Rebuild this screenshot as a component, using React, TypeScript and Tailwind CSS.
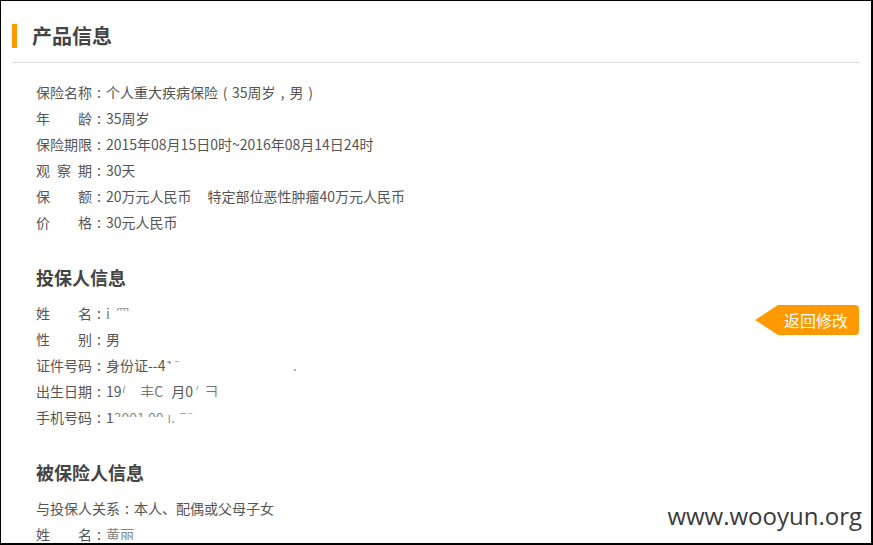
import React from "react";

const cjk = { fontFamily: '"Noto Sans CJK SC", "Noto Sans", sans-serif' };

// full-width punctuation drawn centred in a 1em box, as the original font does
const P = ({ c }: { c: string }) => (
  <span className="inline-block w-[14px] text-center">{c}</span>
);

const Label = ({ text }: { text: string }) => (
  <>
    <span className="inline-block w-[56px] [text-align-last:justify]">{text}</span>
    <P c=":" />
  </>
);

const Row = ({ label, children }: { label: string; children: React.ReactNode }) => (
  <div className="h-[26px] leading-[26px] whitespace-nowrap">
    <Label text={label} />
    {children}
  </div>
);

// partly wiped-out characters, only the top part of the glyph stays
const Faded = ({ text, h = 9, color = "#777" }: { text: string; h?: number; color?: string }) => (
  <span className="inline-block overflow-hidden align-top" style={{ height: h + 7, color }}>
    <span className="block leading-[26px]">{text}</span>
  </span>
);

const Gap = ({ w }: { w: number }) => <span className="inline-block" style={{ width: w }} />;

const SectionTitle = ({ children }: { children: React.ReactNode }) => (
  <h3 className="mt-[30px] mb-[11px] h-[24px] leading-[24px] text-[18px] font-bold text-[#444]">
    {children}
  </h3>
);

export default function App() {
  return (
    <div
      className="relative w-[873px] h-[545px] overflow-hidden bg-white border-t border-l border-r-2 border-b-2 border-black"
      style={cjk}
    >
      <div className="mx-[11px]">
        <div className="flex items-center gap-[15px] pt-[23px] pb-[14px] border-b border-[#dddddd]">
          <span className="block w-[5px] h-[24px] bg-[#ff9900]" />
          <h2 className="text-[20px] leading-[24px] font-bold text-[#444]">产品信息</h2>
        </div>

        <div className="pl-[24px] pt-4 text-[14px] text-[#555]">
          <Row label="保险名称">
            个人重大疾病保险<P c="(" />35周岁<P c="," />男<P c=")" />
          </Row>
          <Row label="年龄">35周岁</Row>
          <Row label="保险期限">2015年08月15日0时~2016年08月14日24时</Row>
          <Row label="观察期">30天</Row>
          <Row label="保额">
            20万元人民币<span className="ml-4">特定部位恶性肿瘤40万元人民币</span>
          </Row>
          <Row label="价格">30元人民币</Row>

          <SectionTitle>投保人信息</SectionTitle>
          <Row label="姓名">
            <Faded text="i" h={12} />
            <Gap w={6} />
            <Faded text="罚" h={4} color="#999" />
          </Row>
          <Row label="性别">男</Row>
          <Row label="证件号码">
            身份证--4
            <Faded text="1" h={5} color="#888" />
            <Faded text="2" h={3} color="#aaa" />
            <Gap w={112} />
            <span className="text-[#999]">.</span>
          </Row>
          <Row label="出生日期">
            19<Faded text="(" h={8} color="#999" />
            <Gap w={14} />
            <Faded text="丰" h={12} />
            <Faded text="C" h={12} />
            <Gap w={8} />
            月0<Faded text="/" h={5} color="#999" />
            <Gap w={6} />
            <Faded text="彐" h={12} />
          </Row>
          <Row label="手机号码">
            1
            <Faded text="3001 00" h={6} color="#888" />
            <Gap w={4} />
            <Faded text="ı." h={12} color="#999" />
            <Gap w={4} />
            <Faded text="79" h={3} color="#aaa" />
          </Row>

          <SectionTitle>被保险人信息</SectionTitle>
          <div className="h-[26px] leading-[26px]">
            与投保人关系<P c=":" />本人、配偶或父母子女
          </div>
          <Row label="姓名">
            <Faded text="黄丽" h={12} color="#888" />
          </Row>
        </div>
      </div>

      <button className="absolute left-[754px] top-[304px] flex items-center cursor-pointer">
        <span className="block w-0 h-0 border-y-[15px] border-y-transparent border-r-[23px] border-r-[#ff9900]" />
        <span className="block w-[81px] h-[30px] leading-[30px] pl-[6px] text-left rounded-r-[4px] bg-[#ff9900] text-white text-[16px]">
          返回修改
        </span>
      </button>

      <div
        className="absolute right-[9px] top-[499px] text-[24px] leading-[32px] text-[#3a3a3a]"
        style={{ fontFamily: '"Open Sans", sans-serif' }}
      >
        www.wooyun.org
      </div>
    </div>
  );
}
